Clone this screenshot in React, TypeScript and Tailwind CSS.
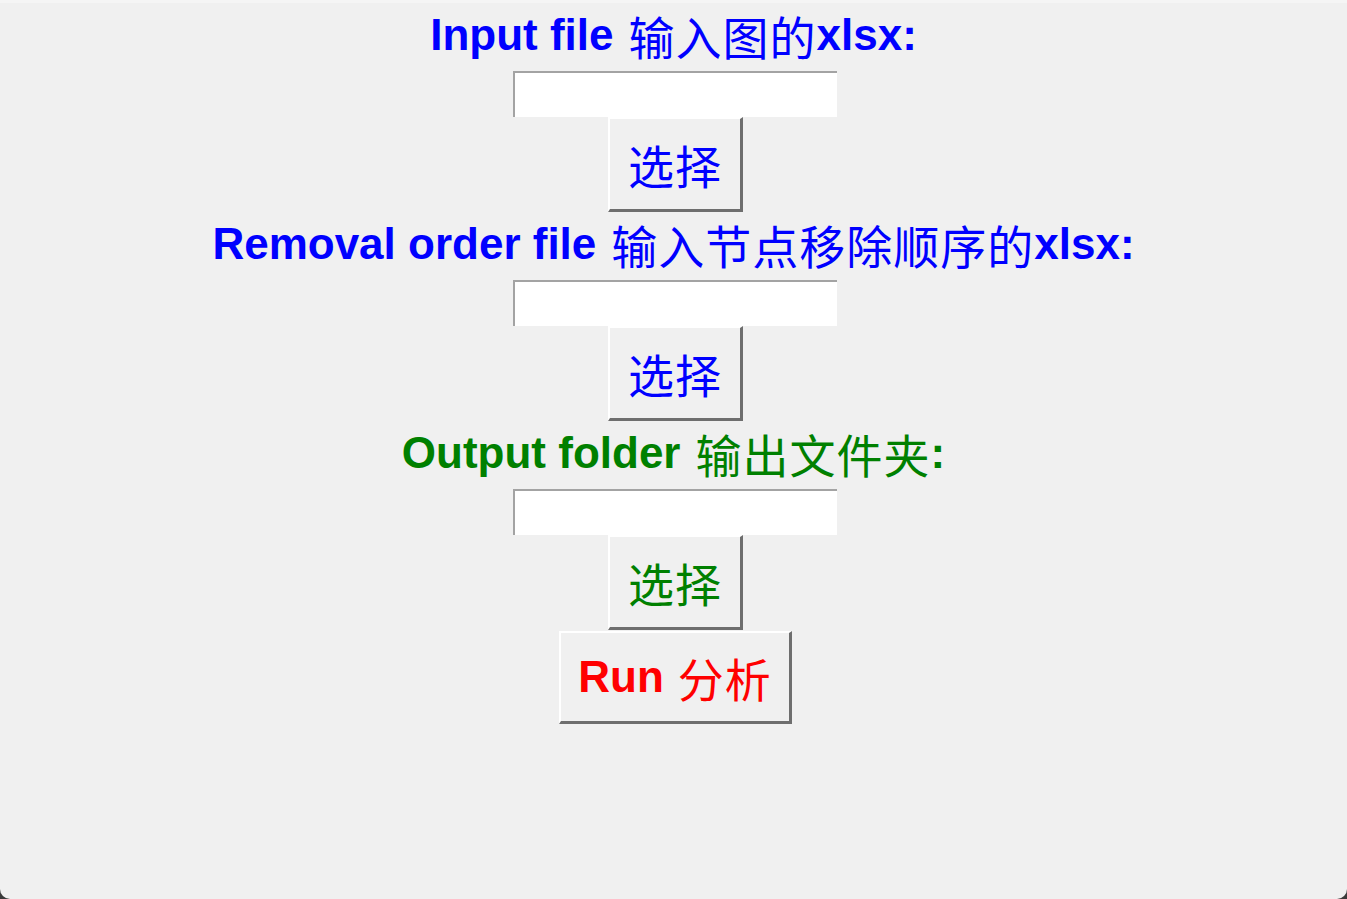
const latin = { fontFamily: '"Liberation Sans", Arial, sans-serif' };

function Cjk({ children, className = '' }: { children: React.ReactNode; className?: string }) {
  return (
    <span className={`font-normal text-[46px] tracking-[1px] [font-family:'Noto_Sans_CJK_SC',sans-serif] ${className}`}>
      {children}
    </span>
  );
}

function Label({ en, zh, tail, color }: { en: string; zh: string; tail: string; color: string }) {
  return (
    <div className={`h-[68px] flex items-center pb-1 leading-none whitespace-nowrap ${color}`}>
      <span className="font-bold text-[44px]" style={latin}>
        {en}
      </span>
      <Cjk className="ml-[15px]">{zh}</Cjk>
      <span className="font-bold text-[44px]" style={latin}>
        {tail}
      </span>
    </div>
  );
}

function Entry() {
  return (
    <div className="ml-1 w-[324px] h-[46px] bg-white border-t-2 border-l-2 border-[#a3a3a3]" />
  );
}

function TkButton({ children, className }: { children: React.ReactNode; className: string }) {
  return (
    <button
      className={`ml-1 flex items-center justify-center bg-[#f0f0f0] border-t-2 border-l-2 border-t-white border-l-white border-r-[3px] border-b-[3px] border-r-[#6e6e6e] border-b-[#6e6e6e] leading-none whitespace-nowrap ${className}`}
    >
      {children}
    </button>
  );
}

export default function App() {
  const sections = [
    { en: 'Input file', zh: '输入图的', tail: 'xlsx:', color: 'text-[#0000ff]' },
    { en: 'Removal order file', zh: '输入节点移除顺序的', tail: 'xlsx:', color: 'text-[#0000ff]' },
    { en: 'Output folder', zh: '输出文件夹', tail: ':', color: 'text-[#008000]' },
  ];

  return (
    <div className="min-h-screen bg-[#3a3a3a]">
      <div className="h-[899px] bg-[#f0f0f0] border-t-[3px] border-[#f5f5f5] rounded-b-[10px] flex flex-col items-center">
        {sections.map((s) => (
          <div key={s.en} className="flex flex-col items-center">
            <Label en={s.en} zh={s.zh} tail={s.tail} color={s.color} />
            <Entry />
            <TkButton className={`w-[135px] h-[95px] ${s.color}`}>
              <Cjk>选择</Cjk>
            </TkButton>
          </div>
        ))}

        {/* Run */}
        <TkButton className="mt-px w-[233px] h-[93px] text-[#ff0000] gap-[14px]">
          <span className="font-bold text-[44px]" style={latin}>
            Run
          </span>
          <Cjk>分析</Cjk>
        </TkButton>
      </div>
    </div>
  );
}
